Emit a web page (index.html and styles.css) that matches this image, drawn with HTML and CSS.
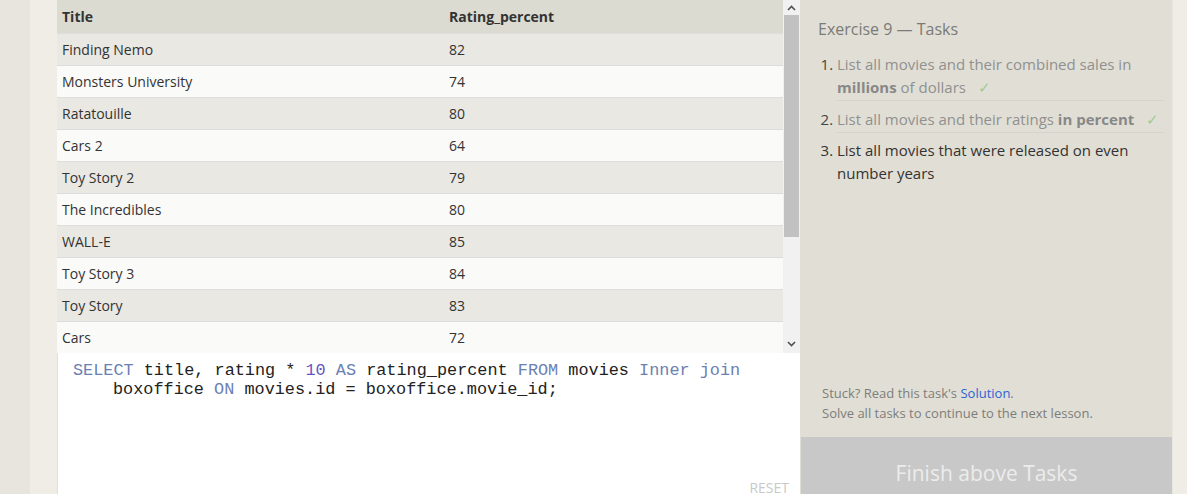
FILE: index.html
```html
<!DOCTYPE html>
<html lang="en">
<head>
<meta charset="utf-8">
<title>SQL Exercise 9</title>
<link rel="stylesheet" href="styles.css">
</head>
<body>
<div class="page">
  <div class="edge"></div>
  <div class="content">
    <div class="work">
      <div class="results">
        <div class="table">
          <div class="row head"><div class="c1">Title</div><div class="c2">Rating_percent</div></div>
          <div class="row odd"><div class="c1">Finding Nemo</div><div class="c2">82</div></div>
          <div class="row even"><div class="c1">Monsters University</div><div class="c2">74</div></div>
          <div class="row odd"><div class="c1">Ratatouille</div><div class="c2">80</div></div>
          <div class="row even"><div class="c1">Cars 2</div><div class="c2">64</div></div>
          <div class="row odd"><div class="c1">Toy Story 2</div><div class="c2">79</div></div>
          <div class="row even"><div class="c1">The Incredibles</div><div class="c2">80</div></div>
          <div class="row odd"><div class="c1">WALL-E</div><div class="c2">85</div></div>
          <div class="row even"><div class="c1">Toy Story 3</div><div class="c2">84</div></div>
          <div class="row odd"><div class="c1">Toy Story</div><div class="c2">83</div></div>
          <div class="row even"><div class="c1">Cars</div><div class="c2">72</div></div>
        </div>
        <div class="scrollbar">
          <div class="arrow up"><svg width="9" height="6" viewBox="0 0 9 6"><path d="M1 5 L4.5 1.5 L8 5" fill="none" stroke="#505050" stroke-width="1.6"/></svg></div>
          <div class="thumb"></div>
          <div class="track"></div>
          <div class="arrow down"><svg width="9" height="6" viewBox="0 0 9 6"><path d="M1 1 L4.5 4.5 L8 1" fill="none" stroke="#505050" stroke-width="1.6"/></svg></div>
        </div>
      </div>
      <div class="editor">
        <pre class="code"><span class="kw">SELECT</span> title, rating * <span class="num">10</span> <span class="kw">AS</span> rating_percent <span class="kw">FROM</span> movies <span class="kw">Inner join</span>
<span class="wrap">boxoffice <span class="kw">ON</span> movies.id = boxoffice.movie_id;</span></pre>
        <div class="reset">RESET</div>
      </div>
    </div>
    <aside class="panel">
      <div class="tasks">
        <h2 class="title">Exercise 9 — Tasks</h2>
        <ol class="list">
          <li class="done">List all movies and their combined sales in <b>millions</b> of dollars <span class="check">✓</span></li>
          <li class="done">List all movies and their ratings <b>in percent</b> <span class="check">✓</span></li>
          <li class="todo">List all movies that were released on even number years</li>
        </ol>
      </div>
      <div class="hint">
        <p>Stuck? Read this task's <a href="#">Solution</a>.</p>
        <p>Solve all tasks to continue to the next lesson.</p>
      </div>
      <div class="finish">Finish above Tasks</div>
    </aside>
  </div>
</div>
</body>
</html>
```

FILE: styles.css
```css
html, body {
  margin: 0;
  padding: 0;
  height: 100%;
  overflow: hidden;
}
body {
  background: #e8e5df;
  font-family: "Open Sans", "Noto Sans", sans-serif;
  color: #333;
}
.page {
  display: flex;
  height: 509px;
}
.edge {
  width: 30px;
  flex: none;
  background: #e8e5df;
}
.content {
  flex: 1;
  display: flex;
  background: #f0ede7;
  padding: 0 15px 0 27px;
}
.work {
  width: 743px;
  flex: none;
  display: flex;
  flex-direction: column;
}
.results {
  display: flex;
  height: 353px;
}
.table {
  width: 726px;
  font-size: 14px;
}
.row {
  display: flex;
  height: 32px;
  box-sizing: border-box;
  align-items: center;
  border-top: 1px solid #dedddb;
}
.row.head {
  background: #dcdbd1;
  font-weight: 700;
  border-top: none;
  height: 33px;
  padding-bottom: 1px;
}
.row.odd { background: #e9e8e2; }
.row.even { background: #fafaf9; }
.c1 {
  width: 387px;
  padding-left: 5px;
  box-sizing: border-box;
}
.c2 {
  padding-left: 5px;
}
.scrollbar {
  width: 17px;
  display: flex;
  flex-direction: column;
  background: #f1f1f1;
}
.arrow {
  height: 15px;
  display: flex;
  align-items: center;
  justify-content: center;
}
.arrow.down { height: 18px; }
.thumb {
  height: 222px;
  margin: 0 1px;
  background: #c1c1c1;
}
.track { flex: 1; }
.editor {
  flex: 1;
  background: #fff;
  display: flex;
  flex-direction: column;
  border-left: 1px solid #e2e0da;
}
.code {
  margin: 0;
  padding: 8px 0 0 15px;
  font-family: "Liberation Mono", "Courier New", monospace;
  font-size: 16.85px;
  line-height: 19px;
  color: #222;
  white-space: pre;
}
.code .kw { color: #6b7fb3; }
.code .num { color: #6656c0; }
.code .wrap { padding-left: 40px; }
.reset {
  margin-top: 81px;
  align-self: flex-end;
  padding-right: 11px;
  font-size: 14px;
  line-height: 16px;
  color: #c9c9c9;
}
.panel {
  width: 372px;
  flex: none;
  background: #e1dfd5;
  display: flex;
  flex-direction: column;
  border-right: 1px solid #e8e7df;
}
.tasks {
  flex: 1;
  padding: 18px 8px 0 18px;
}
.title {
  margin: 0;
  font-size: 16px;
  font-weight: 400;
  line-height: 22px;
  color: #7a7a78;
}
.list {
  margin: 6px 0 0;
  padding: 0 0 0 19px;
  font-size: 15px;
  line-height: 23px;
}
.list li {
  padding: 7px 0 1px;
}
.list li.todo { padding-top: 6px; }
.list li.done {
  color: #909090;
  border-bottom: 1px solid #d6d4ca;
}
.list li.done::marker { color: #444; }
.list li b { font-weight: 700; color: #888; }
.list li.todo { color: #333; }
.check {
  color: #9ccb9c;
  margin-left: 8px;
}
.hint {
  padding: 0 0 14px 22px;
  font-size: 13px;
  line-height: 20px;
  color: #7d7d7b;
}
.hint p { margin: 0; }
.hint a { color: #2a63d4; text-decoration: none; }
.finish {
  flex: none;
  height: 72px;
  line-height: 72px;
  background: #c8c8c8;
  color: #ececec;
  text-align: center;
  font-size: 21px;
  margin-left: 1px;
}
```
